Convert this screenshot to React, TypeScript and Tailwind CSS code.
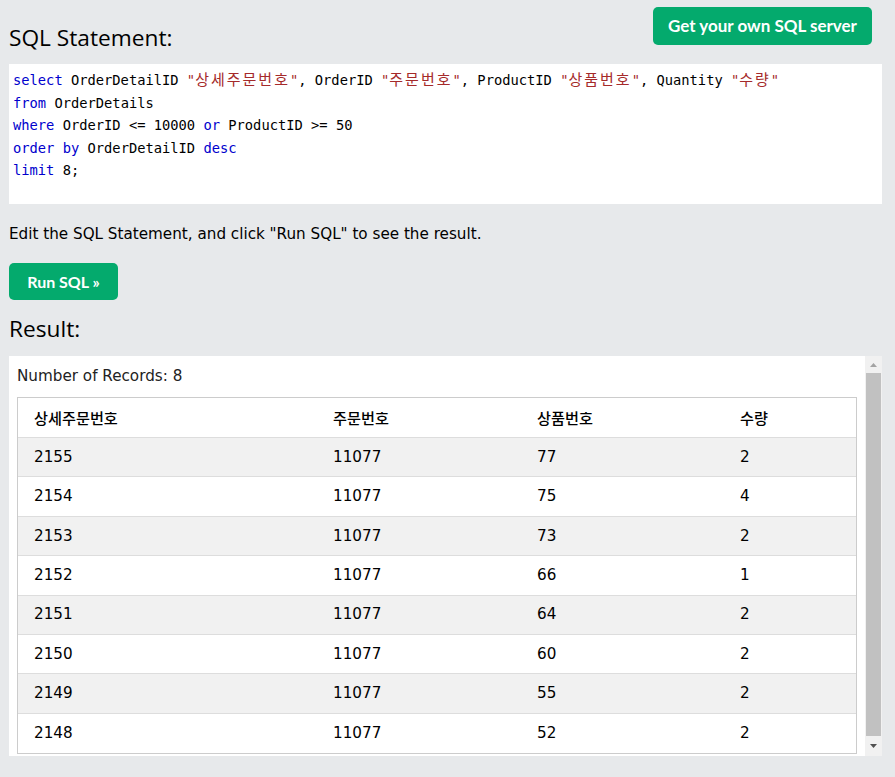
import React from "react"

const rows = [
  ["2155", "11077", "77", "2"],
  ["2154", "11077", "75", "4"],
  ["2153", "11077", "73", "2"],
  ["2152", "11077", "66", "1"],
  ["2151", "11077", "64", "2"],
  ["2150", "11077", "60", "2"],
  ["2149", "11077", "55", "2"],
  ["2148", "11077", "52", "2"],
]

const head = ["상세주문번호", "주문번호", "상품번호", "수량"]

// keyword / string helpers for the code box
function K({ children }: { children: React.ReactNode }) {
  return <span className="text-[#0000cd]">{children}</span>
}

function S({ children }: { children: string }) {
  return (
    <span className="text-[#a52a2a]">
      "<span className="font-['Noto_Sans_CJK_KR',sans-serif] text-[15px] tracking-[2px]">{children}</span>"
    </span>
  )
}

export default function App() {
  const cellFont = "font-['DejaVu_Sans','Noto_Sans_CJK_KR',sans-serif]"

  return (
    <div className="min-h-[777px] bg-[#e7e9eb] pl-[9px] pr-[13px] text-black">
      {/* Header with server button */}
      <div className="flex items-end justify-between pt-[7px]">
        <h3 className="mb-[-8px] font-['Open_Sans',sans-serif] text-[22.7px] leading-[30px]">SQL Statement:</h3>
        <button className="mr-[10px] h-[38px] w-[219px] rounded-[5px] bg-[#04aa6d] font-['Lato',sans-serif] text-[17px] font-bold text-white">
          Get your own SQL server
        </button>
      </div>

      {/* Code */}
      <div className="mt-[19px] h-[140px] bg-white px-[4px] pt-[4px] font-['DejaVu_Sans_Mono','Noto_Sans_CJK_KR',monospace] text-[13.75px] leading-[22.5px] whitespace-pre">
        <div>
          <K>select</K> OrderDetailID <S>상세주문번호</S>, OrderID <S>주문번호</S>, ProductID <S>상품번호</S>, Quantity <S>수량</S>
        </div>
        <div>
          <K>from</K> OrderDetails
        </div>
        <div>
          <K>where</K> OrderID &lt;= 10000 <K>or</K> ProductID &gt;= 50
        </div>
        <div>
          <K>order by</K> OrderDetailID <K>desc</K>
        </div>
        <div>
          <K>limit</K> 8;
        </div>
      </div>

      <p className={`mt-[19px] ${cellFont} text-[15.2px] leading-[22px]`}>
        Edit the SQL Statement, and click "Run SQL" to see the result.
      </p>

      <button className="mt-[18px] h-[37px] w-[109px] rounded-[5px] bg-[#04aa6d] font-['Lato',sans-serif] text-[16px] font-bold text-white">
        Run SQL »
      </button>

      <h3 className="mt-[14px] font-['Open_Sans',sans-serif] text-[22.7px] leading-[30px]">Result:</h3>

      {/* Result box */}
      <div className="mt-[12px] flex h-[400px] bg-white">
        <div className="flex-1 overflow-hidden pl-[8px] pr-[8px]">
          <div className={`${cellFont} pt-[10px] text-[15.2px] leading-[20px] text-[#222]`}>Number of Records: 8</div>
          <div className={`mt-[11px] border border-[#cccccc] ${cellFont} text-[15.2px]`}>
            <div className="grid h-[40px] grid-cols-[299px_204px_203px_1fr] items-center border-b border-[#dddddd] font-['Noto_Sans_CJK_KR',sans-serif] font-medium">
              {head.map((h) => (
                <div key={h} className="pl-[16px]">{h}</div>
              ))}
            </div>
            {rows.map((r, i) => (
              <div
                key={r[0]}
                className={`grid h-[39.4px] grid-cols-[299px_204px_203px_1fr] items-center ${i < rows.length - 1 ? "border-b border-[#dddddd]" : ""} ${i % 2 === 0 ? "bg-[#f1f1f1]" : "bg-white"}`}
              >
                {r.map((c, j) => (
                  <div key={j} className="pl-[16px]">{c}</div>
                ))}
              </div>
            ))}
          </div>
        </div>

        {/* Scrollbar */}
        <div className="flex w-[17px] flex-col bg-[#f1f1f1]">
          <div className="flex h-[17px] items-center justify-center">
            <svg width="7" height="4" viewBox="0 0 7 4">
              <path d="M0 4 L3.5 0 L7 4 Z" fill="#a3a3a3" />
            </svg>
          </div>
          <div className="mx-[1px] h-[363px] bg-[#c1c1c1]" />
          <div className="flex flex-1 items-center justify-center">
            <svg width="7" height="4" viewBox="0 0 7 4">
              <path d="M0 0 L3.5 4 L7 0 Z" fill="#505050" />
            </svg>
          </div>
        </div>
      </div>
    </div>
  )
}
